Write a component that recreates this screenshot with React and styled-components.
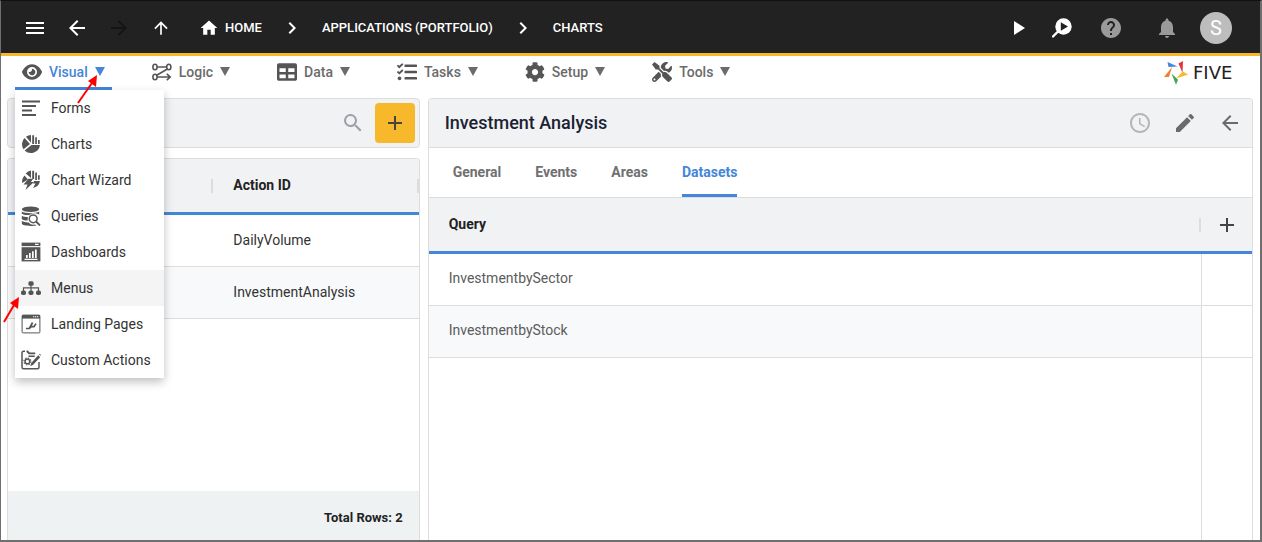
import React from 'react';
import styled, { createGlobalStyle } from 'styled-components';
import {
  MdMenu, MdArrowBack, MdArrowForward, MdArrowUpward, MdHome, MdChevronRight, MdPlayArrow,
  MdHelp, MdNotifications, MdSearch, MdAdd, MdEdit, MdAccessTime,
} from 'react-icons/md';
import { FaTable, FaTasks, FaCog, FaTools } from 'react-icons/fa';
import { FaEye } from 'react-icons/fa6';

const c = {
  dark: '#222222', amber: '#f7b92b', blue: '#4486d8', icon: '#555555', muted: '#6b6b6b',
  panel: '#f1f2f4', line: '#dddddd', stripe: '#f8f9fb', frame: '#6f6f6f',
};

const GlobalStyle = createGlobalStyle`
  * { box-sizing: border-box; }
  body { margin: 0; background: #fff; color: #333; font: 14px/20px Roboto, "Liberation Sans", sans-serif; }
  button { font: inherit; color: inherit; background: none; border: 0; padding: 0; margin: 0; cursor: pointer; }
  svg { display: block; flex: none; }
`;

const Shell = styled.div`
  min-height: 100vh;
  display: flex;
  flex-direction: column;
  border: 1px solid ${c.frame};
  border-top-color: #111;
  border-right-width: 2px;
  border-bottom-width: 2px;
`;

const TopBar = styled.header`
  height: 55px;
  display: flex;
  align-items: center;
  justify-content: space-between;
  padding: 2px 28px 0 22px;
  background: ${c.dark};
  border-bottom: 3px solid ${c.amber};
  color: #fff;
`;

const Group = styled.div`
  display: flex;
  align-items: center;
  gap: ${p => p.$gap}px;
`;

const IconButton = styled.button`
  width: 24px;
  height: 24px;
  display: grid;
  place-items: center;
  color: ${p => p.$color || 'inherit'};
`;

const Crumbs = styled.nav`
  display: flex;
  align-items: center;
  gap: 18px;
  margin-left: 26px;
`;

const Crumb = styled.a`
  display: flex;
  align-items: center;
  gap: 6px;
  color: #fff;
  font-size: 13px;
  font-weight: 500;
  text-decoration: none;
`;

const Avatar = styled.button`
  width: 32px;
  height: 32px;
  border-radius: 50%;
  background: #bdbdbd;
  color: #fff;
  font-size: 20px;
`;

const NavBar = styled.nav`
  height: 34px;
  display: flex;
  align-items: stretch;
  padding: 0 8px 0 14px;
`;

const NavList = styled.div`
  display: flex;
  gap: 33px;
  flex: 1;
`;

const NavItem = styled.div`
  position: relative;
  display: flex;
`;

const NavButton = styled.button`
  display: flex;
  align-items: center;
  gap: 7px;
  padding: 0 7px;
  border-bottom: 3px solid ${p => (p.$active ? c.blue : 'transparent')};
  border-radius: 2px 2px 0 0;
  color: ${p => (p.$active ? c.blue : c.muted)};
  font-weight: 500;
  > svg:first-child { color: ${c.icon}; }
`;

const Menu = styled.div`
  position: absolute;
  top: 100%;
  left: 0;
  z-index: 2;
  width: 149px;
  background: #fff;
  border-radius: 0 0 2px 2px;
  box-shadow: 0 4px 10px rgba(0, 0, 0, 0.25);
`;

const MenuItem = styled.button`
  display: flex;
  align-items: center;
  gap: 10px;
  width: 100%;
  height: 36px;
  padding: 0 6px;
  color: #333;
  white-space: nowrap;
  background: ${p => (p.$hover ? '#f4f4f4' : '#fff')};
  > svg { color: ${c.icon}; }
`;

const Pointer = styled.svg`
  position: absolute;
  z-index: 3;
  left: ${p => p.$x}px;
  top: ${p => p.$y}px;
  pointer-events: none;
`;

const Brand = styled.a`
  display: flex;
  align-items: center;
  gap: 5px;
  width: 88px;
  color: #222;
  font: 18px/20px "DejaVu Sans", sans-serif;
  text-decoration: none;
`;

const Body = styled.main`
  flex: 1;
  display: grid;
  grid-template-columns: 1fr 2fr;
  gap: 8px;
  padding: 8px 7px 0 6px;
`;

const Side = styled.section`
  display: flex;
  flex-direction: column;
  gap: 10px;
`;

const Panel = styled.div`
  display: flex;
  flex-direction: column;
  flex: 1;
  border: 1px solid ${c.line};
  border-bottom: 0;
  border-radius: 4px 4px 0 0;
  overflow: hidden;
`;

const SearchBar = styled.div`
  height: 50px;
  display: flex;
  align-items: center;
  justify-content: flex-end;
  gap: 10px;
  padding: 0 4px;
  background: ${c.panel};
  border: 1px solid ${c.line};
  border-radius: 4px;
`;

const AddButton = styled.button`
  width: 40px;
  height: 40px;
  display: grid;
  place-items: center;
  border-radius: 4px;
  background: ${c.amber};
  color: #444;
`;

const Table = styled.table`
  width: 100%;
  table-layout: fixed;
  border-collapse: separate;
  border-spacing: 0;
`;

const Th = styled.th`
  width: ${p => p.$width || 'auto'};
  height: ${p => p.$height}px;
  padding: ${p => (p.$tight ? '0' : '0 20px 2px')};
  text-align: left;
  font-weight: 700;
  color: #222;
  border-bottom: 3px solid ${c.blue};
  background: ${c.panel} ${p => (p.$grip ? `linear-gradient(${c.line}, ${c.line}) no-repeat right center / 2px 14px` : '')};
  > button { margin: 0 auto; }
`;

const Td = styled.td`
  height: 52px;
  padding: 0 20px ${p => (p.$soft ? 4 : 2)}px;
  color: ${p => (p.$soft ? '#5c5c5c' : '#333')};
  background: ${p => (p.$stripe ? c.stripe : '#fff')};
  border-bottom: 1px solid ${c.line};
  border-left: ${p => (p.$divided ? `1px solid ${c.line}` : '0')};
`;

const Rest = styled.div`
  flex: 1;
  margin-left: auto;
  width: 51px;
  border-left: 1px solid ${c.line};
`;

const Footer = styled.div`
  height: 49px;
  margin-top: auto;
  display: flex;
  align-items: center;
  justify-content: flex-end;
  padding: 4px 16px 0;
  background: #eef2f3;
  color: #222;
  font-size: 13px;
  font-weight: 700;
`;

const TitleBar = styled.div`
  height: 49px;
  display: flex;
  align-items: center;
  justify-content: space-between;
  padding: 0 10px 0 16px;
  background: ${c.panel};
  border-bottom: 1px solid ${c.line};
`;

const Title = styled.h1`
  margin: 0;
  font-size: 18px;
  line-height: 24px;
  font-weight: 500;
  color: #1b2233;
`;

const Tabs = styled.div`
  height: 50px;
  display: flex;
  gap: 34px;
  padding: 0 24px;
  border-bottom: 1px solid ${c.line};
`;

const Tab = styled.button`
  padding-top: 2px;
  font-weight: 700;
  color: ${p => (p.$active ? c.blue : '#707070')};
  border-bottom: 3px solid ${p => (p.$active ? c.blue : 'transparent')};
  border-radius: 2px 2px 0 0;
`;

const Icon = ({ children }) => (
  <svg width="20" height="20" viewBox="0 0 20 20" fill="currentColor" aria-hidden="true">{children}</svg>
);

const Caret = () => (
  <svg width="10" height="9" viewBox="0 0 10 9" fill="currentColor" aria-hidden="true"><path d="M0 0h10L5 9z" /></svg>
);

const LogicIcon = () => (
  <Icon>
    <g fill="none" stroke="currentColor" strokeWidth="1.6">
      <ellipse cx="3" cy="5" rx="2.1" ry="2.8" />
      <ellipse cx="16.8" cy="5" rx="2.1" ry="2.8" />
      <ellipse cx="3" cy="15" rx="2.1" ry="2.8" />
      <path d="M5 5h9.6M15.4 7 4.7 13.2M5 15h12.5M14.8 11.8l3.4 3.2-3.4 3.2" />
    </g>
  </Icon>
);

const FormsIcon = () => (
  <Icon><path d="M1 2.5h18v2H1zM1 7h14v2H1zM1 11.5h10v2H1zM1 16h14v2H1z" /></Icon>
);

const ChartsIcon = () => (
  <Icon>
    <path d="M3.5 4 9 10l-6.500 5.200A9 9 0 0 1 3.500 4zM5 2.700A9 9 0 0 1 10 1v7.700zM3.600 16.500 10.500 11H19a9.200 9.200 0 0 1-15.400 5.500zM11.200 1.200h1.900V10h-1.900zM14.200 3.200h1.700V10h-1.700zM17 6h1.700v4H17z" />
  </Icon>
);

const WizardIcon = () => (
  <Icon>
    <path d="M3.500 5.500 7 9.500 1.200 13A9 9 0 0 1 3.500 5.500zM4.700 3.600A9 9 0 0 1 10 .6V8zM11.200.8h1.900V9h-1.900zM14.200 2.500h1.700V10h-1.700zM17 5.200h1.700v4.500H17zM13 11h6a9 9 0 0 1-7 7l2.500-4.500H12z" />
    <path d="M7.500 8.800h4.700L9.900 12h3L4.500 20l2-5.500H2.500z" />
  </Icon>
);

const QueriesIcon = () => (
  <Icon>
    <ellipse cx="9.500" cy="3.200" rx="8.700" ry="2.800" />
    <path d="M.8 5.500c3 2.200 14.400 2.200 17.400 0v3.200C16 7 11 6.500 8.500 9 5 9.200 2 8.700.8 7.800zM.8 9.800c1.500 1 4 1.400 6.300 1.400-.5 1.100-.6 2.200-.3 3.300-2.600-.1-5-.6-6-1.600zM.8 15c1.700 1 4.200 1.500 6.800 1.400A6 6 0 0 0 14 18.400c.7.200.8.900 1.300 1.100-4 .8-14.500.8-14.500-2.200z" />
    <circle cx="12.200" cy="12.800" r="3.900" fill="none" stroke="currentColor" strokeWidth="1.500" />
    <path d="m15 15.500 4 3.900" stroke="currentColor" strokeWidth="1.800" />
  </Icon>
);

const DashboardsIcon = () => (
  <Icon>
    <path d="M.6.600h18.800v3.500H.6z" />
    <path d="M.6 5.200h18.800v14.200H.6z" />
    <path d="M14 1.700h3.500v1.200H14zM3.500 16.700h13v1.200h-13zM5 13h1.700v3H5zM8 11h1.700v5H8zM11 9.300h1.700V16H11zM14 7.500h1.700V16H14z" fill="#fff" />
  </Icon>
);

const MenusIcon = () => (
  <Icon>
    <rect x="7.400" y="3.200" width="5.200" height="4.600" rx="1.600" />
    <path d="M2.500 13V9.800h15V13M10 7v6" fill="none" stroke="currentColor" strokeWidth="1.200" />
    <rect x="0" y="12.400" width="5" height="4.600" rx="1.800" />
    <rect x="7.500" y="12.400" width="5" height="4.600" rx="1.800" />
    <rect x="15" y="12.400" width="5" height="4.600" rx="1.800" />
  </Icon>
);

const LandingIcon = () => (
  <Icon>
    <rect x="1.100" y="1.100" width="17.800" height="17.800" rx="1" fill="none" stroke="currentColor" />
    <path d="M1 1h18v3.600H1z" />
    <path d="M12 2.300h1.300v1H12zM14 2.300h1.300v1H14zM16 2.300h1.300v1H16z" fill="#fff" />
    <path d="M5 14.500h3.200l2.200-1.900h2.600l2-3M8.600 14l3-5.500" fill="none" stroke="currentColor" strokeWidth="1.700" />
  </Icon>
);

const ActionsIcon = () => (
  <Icon>
    <path d="M4 1.300H2.500C1.600 1.300 1 1.900 1 2.800v14.400c0 .9.600 1.500 1.500 1.500h14c.9 0 1.500-.6 1.500-1.500V12" fill="none" stroke="currentColor" strokeWidth="1.500" />
    <path d="M5.500.6h1.300l2 2h5.400v1.600H7.700L5.500 2zM7.500 5.500h6.300V7H7.500z" />
    <circle cx="6.400" cy="11.400" r="2.300" fill="none" stroke="currentColor" strokeWidth="1.400" />
    <circle cx="6.400" cy="11.400" r="3.400" fill="none" stroke="currentColor" strokeWidth="1.300" strokeDasharray="1.400 1.270" />
    <path d="m17.200 5.300 2 2-7 7.500-3 1.500 1-3.200zM18 4.300l.8-.6 1.200 1.200-.6.900z" />
  </Icon>
);

const InspectIcon = () => (
  <svg width="20" height="20" viewBox="0 0 20 20" aria-hidden="true">
    <path d="m1 18.500 5.500-5.500" stroke="#fff" strokeWidth="2.400" strokeLinecap="round" />
    <circle cx="11.500" cy="8.500" r="8.200" fill="#fff" />
    <path d="M8.800 4.200v8.600l7.200-4.300z" fill="#222" />
  </svg>
);

const BrandMark = () => (
  <svg width="24" height="24" viewBox="0 0 24 24" aria-hidden="true">
    <path d="m3.500 1 10 4.500-9 .5z" fill="#4486d8" />
    <path d="m19 0-4.500 2.500L18.500 12z" fill="#e0353b" />
    <path d="m24 13.500-5.200-3L12 17.500z" fill="#f7b92b" />
    <path d="m7.500 12.500 6.500 6.200-2 5z" fill="#3fa650" />
    <path d="m8 6-3 10H0z" fill="#f27f2f" />
  </svg>
);

const navItems = [
  ['Visual', <FaEye size={20} />], ['Logic', <LogicIcon />], ['Data', <FaTable size={20} />],
  ['Tasks', <FaTasks size={20} />], ['Setup', <FaCog size={20} />], ['Tools', <FaTools size={20} />],
];

const menuItems = [
  ['Forms', FormsIcon], ['Charts', ChartsIcon], ['Chart Wizard', WizardIcon], ['Queries', QueriesIcon],
  ['Dashboards', DashboardsIcon], ['Menus', MenusIcon], ['Landing Pages', LandingIcon], ['Custom Actions', ActionsIcon],
];

const RedArrow = ({ x, y, w, h }) => (
  <Pointer $x={x} $y={y} width={w} height={h} viewBox={`0 0 ${w} ${h}`} aria-hidden="true">
    <path d={`M1 ${h - 1} ${w - 6} 8`} stroke="#f00" strokeWidth="2" />
    <path d={`M${w - 1} 0 ${w - 2} 12 ${w - 10} 6z`} fill="#f00" />
  </Pointer>
);

export default function App() {
  return (
    <>
      <GlobalStyle />
      <Shell>
        <TopBar>
          <Group $gap={0}>
            <Group $gap={18}>
              <IconButton aria-label="Menu"><MdMenu size={24} /></IconButton>
              <IconButton aria-label="Back"><MdArrowBack size={24} /></IconButton>
              <IconButton aria-label="Forward" $color="#151515"><MdArrowForward size={24} /></IconButton>
              <IconButton aria-label="Up"><MdArrowUpward size={20} /></IconButton>
            </Group>
            <Crumbs aria-label="Breadcrumb">
              <Crumb href="#home"><MdHome size={20} />HOME</Crumb>
              <MdChevronRight size={24} />
              <Crumb href="#applications">APPLICATIONS (PORTFOLIO)</Crumb>
              <MdChevronRight size={24} />
              <Crumb href="#charts">CHARTS</Crumb>
            </Crumbs>
          </Group>
          <Group $gap={32}>
            <Group $gap={25}>
              <Group $gap={20}>
                <IconButton aria-label="Run"><MdPlayArrow size={24} /></IconButton>
                <IconButton aria-label="Inspect"><InspectIcon /></IconButton>
              </Group>
              <IconButton aria-label="Help" $color="#9a9a9a"><MdHelp size={24} /></IconButton>
            </Group>
            <Group $gap={21}>
              <IconButton aria-label="Notifications" $color="#9a9a9a"><MdNotifications size={24} /></IconButton>
              <Avatar>S</Avatar>
            </Group>
          </Group>
        </TopBar>

        <NavBar>
          <NavList>
            {navItems.map(([label, icon], i) => (
              <NavItem key={label}>
                <NavButton $active={i === 0}>{icon}{label}<Caret /></NavButton>
                {i === 0 && (
                  <>
                    <Menu>
                      {menuItems.map(([name, Glyph]) => (
                        <MenuItem key={name} $hover={name === 'Menus'}><Glyph />{name}</MenuItem>
                      ))}
                      <RedArrow x={-12} y={207} w={17} h={26} />
                    </Menu>
                    <RedArrow x={62} y={19} w={21} h={29} />
                  </>
                )}
              </NavItem>
            ))}
          </NavList>
          <Brand href="#five"><BrandMark />FIVE</Brand>
        </NavBar>

        <Body>
          <Side>
            <SearchBar>
              <IconButton aria-label="Search" $color="#9aa0a6"><MdSearch size={24} /></IconButton>
              <AddButton aria-label="Add chart"><MdAdd size={24} /></AddButton>
            </SearchBar>
            <Panel>
              <Table>
                <thead>
                  <tr><Th $width="50%" $height={56} $grip /><Th $height={56} $grip>Action ID</Th></tr>
                </thead>
                <tbody>
                  <tr><Td /><Td>DailyVolume</Td></tr>
                  <tr><Td $stripe /><Td $stripe>InvestmentAnalysis</Td></tr>
                </tbody>
              </Table>
              <Footer>Total Rows: 2</Footer>
            </Panel>
          </Side>

          <Panel>
            <TitleBar>
              <Title>Investment Analysis</Title>
              <Group $gap={21}>
                <IconButton aria-label="History" $color="#b4b5b7"><MdAccessTime size={24} /></IconButton>
                <IconButton aria-label="Edit" $color={c.muted}><MdEdit size={24} /></IconButton>
                <IconButton aria-label="Close" $color={c.muted}><MdArrowBack size={24} /></IconButton>
              </Group>
            </TitleBar>
            <Tabs>
              {['General', 'Events', 'Areas', 'Datasets'].map(t => (
                <Tab key={t} $active={t === 'Datasets'}>{t}</Tab>
              ))}
            </Tabs>
            <Table>
              <thead>
                <tr>
                  <Th $height={56} $grip>Query</Th>
                  <Th $height={56} $width="51px" $tight><IconButton aria-label="Add query" $color="#444"><MdAdd size={24} /></IconButton></Th>
                </tr>
              </thead>
              <tbody>
                <tr><Td $soft>InvestmentbySector</Td><Td $divided /></tr>
                <tr><Td $soft $stripe>InvestmentbyStock</Td><Td $divided /></tr>
              </tbody>
            </Table>
            <Rest />
          </Panel>
        </Body>
      </Shell>
    </>
  );
}
